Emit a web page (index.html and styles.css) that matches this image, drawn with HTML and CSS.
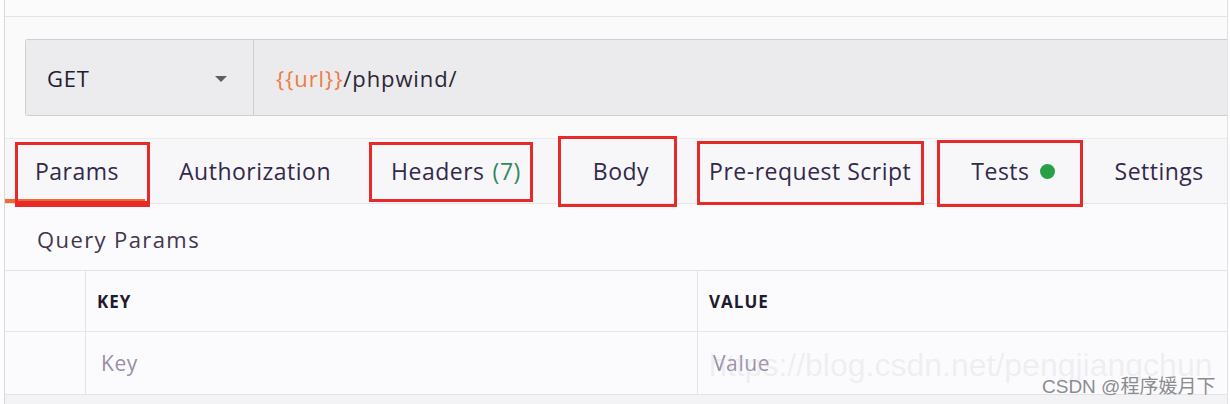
FILE: index.html
```html
<!DOCTYPE html>
<html>
<head>
<meta charset="utf-8">
<link rel="stylesheet" href="styles.css">
</head>
<body>
<div class="frame">
  <div class="topbar"></div>
  <div class="urlrow">
    <div class="urlbox">
      <div class="method">
        <span class="method-text">GET</span>
        <span class="caret"></span>
      </div>
      <div class="url"><span class="var">{{url}}</span>/phpwind/</div>
    </div>
  </div>
  <div class="tabs">
    <div class="tab active mark mark-params">Params</div>
    <div class="tab">Authorization</div>
    <div class="tab mark mark-headers">Headers <span class="count">(7)</span></div>
    <div class="tab tab-body mark mark-body">Body</div>
    <div class="tab mark mark-pre">Pre-request Script</div>
    <div class="tab mark mark-tests">Tests <span class="dot"></span></div>
    <div class="tab">Settings</div>
  </div>
  <div class="section-title">Query Params</div>
  <div class="table">
    <div class="cell c0 head"></div>
    <div class="cell c1 head">KEY</div>
    <div class="cell c2 head">VALUE</div>
    <div class="cell c0 data"></div>
    <div class="cell c1 data ph">Key</div>
    <div class="cell c2 data ph">Value</div>
  </div>
  <div class="footer"></div>
</div>
<div class="wm-url">https://blog.csdn.net/pengjiangchun</div>
<div class="wm-name">CSDN @程序媛月下</div>
</body>
</html>
```

FILE: styles.css
```css
html, body {
  margin: 0;
  padding: 0;
}
body {
  position: relative;
  width: 1230px;
  height: 404px;
  overflow: hidden;
  background: #fdfdfd;
  font-family: "Open Sans", "Noto Sans", sans-serif;
  color: #2e2440;
}
.frame {
  margin-left: 4px;
  width: 1222px;
  height: 404px;
  border-left: 1px solid #d9d9dd;
  border-right: 1px solid #e2e2e6;
  background: #fafafb;
  overflow: hidden;
  display: flex;
  flex-direction: column;
}
.topbar {
  height: 16px;
  flex: none;
  border-bottom: 1px solid #e5e5e8;
  background: #fbfbfc;
}
.urlrow {
  padding: 22px 0 0 20px;
  flex: none;
}
.urlbox {
  display: flex;
  height: 75px;
  border: 1px solid #cfcfd2;
  border-right: none;
  border-radius: 3px 0 0 3px;
  background: #ebebed;
}
.method {
  width: 228px;
  flex: none;
  box-sizing: border-box;
  border-right: 1px solid #cdcdd0;
  display: flex;
  align-items: center;
  justify-content: space-between;
  padding: 0 26px 0 21px;
  background: #ececee;
}
.method-text {
  font-size: 22px;
  letter-spacing: 0.8px;
  color: #231c2e;
}
.caret {
  width: 0;
  height: 0;
  border-left: 6px solid transparent;
  border-right: 6px solid transparent;
  border-top: 6px solid #5e5e62;
  margin-top: 2px;
}
.url {
  display: flex;
  align-items: center;
  padding-left: 22px;
  font-size: 22px;
  letter-spacing: 0.9px;
  color: #2d2536;
}
.var {
  color: #f07b43;
}
.tabs {
  margin-top: 22px;
  flex: none;
  height: 64px;
  border-top: 1px solid #ebebef;
  border-bottom: 1px solid #e4e4e8;
  background: #f7f7f9;
  display: flex;
}
.tab {
  position: relative;
  display: flex;
  align-items: center;
  padding: 0 30px;
  font-size: 23px;
  letter-spacing: 0.5px;
  color: #33294a;
  white-space: nowrap;
}
.tab-body {
  margin-left: 12px;
}
.tab.active::before {
  content: "";
  position: absolute;
  left: -2px;
  right: 4px;
  bottom: 0;
  height: 4px;
  background: #f06a35;
}
.mark::after {
  content: "";
  position: absolute;
  border: 3px solid #e62a2a;
}
.mark-params::after { left: 10px; right: -1px; top: 3px; bottom: -4px; border-bottom-width: 6px; }
.mark-headers::after { left: 8px; right: 18px; top: 3px; bottom: 1px; }
.mark-body::after { left: -5px; right: 2px; top: -3px; bottom: -4px; }
.mark-pre::after { left: 18px; right: 17px; top: 2px; bottom: -2px; }
.mark-tests::after { left: -4px; right: 2px; top: 1px; bottom: -4px; }
.count {
  color: #2f8a5a;
  margin-left: 8px;
}
.dot {
  width: 15px;
  height: 15px;
  border-radius: 50%;
  background: #27a047;
  margin-left: 10px;
}
.section-title {
  flex: none;
  height: 66px;
  box-sizing: border-box;
  display: flex;
  align-items: center;
  padding: 3px 0 0 32px;
  font-size: 22px;
  letter-spacing: 1.4px;
  color: #41364f;
  background: #fbfbfd;
}
.table {
  flex: none;
  display: grid;
  grid-template-columns: 80px 612px 1fr;
  grid-template-rows: 61px 62px;
  border-top: 1px solid #e4e4e8;
  border-bottom: 1px solid #e4e4e8;
  background: #fbfbfd;
}
.cell {
  display: flex;
  align-items: center;
}
.head {
  border-bottom: 1px solid #e6e6ea;
}
.c1, .c2 {
  border-left: 1px solid #e4e4e8;
}
.head.c1, .head.c2 {
  padding-left: 11px;
  font-size: 17px;
  font-weight: 700;
  letter-spacing: 1px;
  color: #211a2e;
}
.data.c1, .data.c2 {
  padding-left: 15px;
  font-size: 21px;
  letter-spacing: 0.6px;
  color: #9a8fa6;
}
.footer {
  flex: 1;
  background: #f3f3f6;
}
.wm-url {
  position: absolute;
  left: 709px;
  top: 349px;
  font-family: "Liberation Sans", Arial, sans-serif;
  font-size: 32px;
  line-height: 32px;
  color: rgba(200, 200, 210, 0.25);
  white-space: nowrap;
}
.wm-name {
  position: absolute;
  left: 1042px;
  top: 377px;
  font-family: "Liberation Sans", "Noto Sans CJK SC", sans-serif;
  font-size: 19px;
  line-height: 19px;
  color: #8c8c90;
  white-space: nowrap;
}
```
